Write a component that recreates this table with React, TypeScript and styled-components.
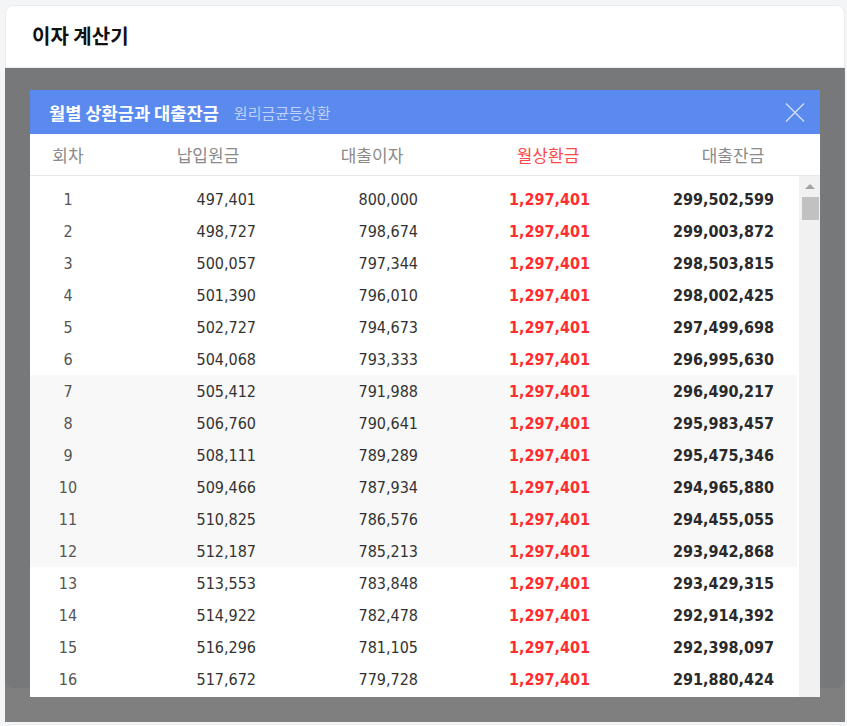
import React from 'react';
import styled, { createGlobalStyle } from 'styled-components';

const GlobalStyle = createGlobalStyle`
  html, body {
    margin: 0;
    padding: 0;
    background: #f4f5f7;
    overflow: hidden;
  }
  * {
    box-sizing: border-box;
  }
`;

const KR = `"Noto Sans CJK KR", "Noto Sans", sans-serif`;
const NUM = `"DejaVu Sans Condensed", "DejaVu Sans", sans-serif`;

const LOAN = 300000000;
const RATE = 0.032 / 12;
const MONTHS = 360;
// only the rows that fit in the list window are drawn
const VISIBLE = 16;

interface Schedule {
  no: number;
  principal: number;
  interest: number;
  payment: number;
  balance: number;
}

const buildSchedule = (): Schedule[] => {
  const payment = (LOAN * RATE) / (1 - Math.pow(1 + RATE, -MONTHS));
  const rows: Schedule[] = [];
  let balance = LOAN;
  for (let no = 1; no <= MONTHS; no += 1) {
    const interest = balance * RATE;
    const principal = payment - interest;
    balance -= principal;
    rows.push({ no, principal, interest, payment, balance: Math.max(balance, 0) });
  }
  return rows;
};

const won = (n: number) => Math.round(n).toLocaleString('en-US');

const schedule = buildSchedule();

const App = () => (
  <>
    <GlobalStyle />
    <Page>
      <TitleCard>
        <Title>이자 계산기</Title>
      </TitleCard>
      <Stage>
        <UnderCard />
        <Dim>
          <Modal>
            <ModalHead>
              <ModalTitle>월별 상환금과 대출잔금</ModalTitle>
              <ModalSub>원리금균등상환</ModalSub>
              <Close aria-label="닫기">
                <svg width="20" height="19" viewBox="0 0 20 19">
                  <path
                    d="M1 0.5 L19 18.5 M19 0.5 L1 18.5"
                    stroke="#d6e1fb"
                    strokeWidth="1.3"
                    fill="none"
                  />
                </svg>
              </Close>
            </ModalHead>
            <HeadRow>
              <HeadCell>회차</HeadCell>
              <HeadCell>납입원금</HeadCell>
              <HeadCell>대출이자</HeadCell>
              <HeadCell accent>월상환금</HeadCell>
              <HeadCell>대출잔금</HeadCell>
            </HeadRow>
            <Body>
              <Rows>
                {schedule.slice(0, VISIBLE).map((r) => (
                  <Row key={r.no} shaded={Math.floor((r.no - 1) / 6) % 2 === 1}>
                    <NoCell>{r.no}</NoCell>
                    <NumCell>{won(r.principal)}</NumCell>
                    <NumCell>{won(r.interest)}</NumCell>
                    <NumCell tone="red">{won(r.payment)}</NumCell>
                    <NumCell tone="dark">{won(r.balance)}</NumCell>
                  </Row>
                ))}
              </Rows>
              <ScrollTrack>
                <ArrowUp />
                <Thumb />
              </ScrollTrack>
            </Body>
          </Modal>
        </Dim>
      </Stage>
      <NextCard />
    </Page>
  </>
);

export default App;

const Page = styled.div`
  padding: 5px 2px 0 5px;
  height: 726px;
  overflow: hidden;
`;

const TitleCard = styled.header`
  height: 63px;
  background: #fff;
  border: 1px solid #e8eaee;
  border-radius: 8px 8px 0 0;
  display: flex;
  align-items: center;
  padding: 0 0 2px 26px;
`;

const Title = styled.h1`
  margin: 0;
  font-family: ${KR};
  font-size: 20px;
  font-weight: 700;
  color: #111;
`;

const Stage = styled.section`
  position: relative;
  height: 654px;
  background: #fff;
`;

const UnderCard = styled.div`
  height: 620px;
  margin-right: 1px;
  background: #eef0f3;
  border-radius: 0 0 8px 8px;
`;

const Dim = styled.div`
  position: absolute;
  inset: 0;
  background: rgba(0, 0, 0, 0.5);
  padding: 22px 24px 0 25px;
`;

const Modal = styled.div`
  width: 790px;
  height: 607px;
  background: #fff;
  display: flex;
  flex-direction: column;
  overflow: hidden;
`;

const ModalHead = styled.div`
  height: 44px;
  flex: none;
  background: #5b8aef;
  display: flex;
  align-items: center;
  padding: 0 15px 0 19px;
  gap: 15px;
`;

const ModalTitle = styled.h2`
  margin: 0;
  font-family: ${KR};
  font-size: 17.6px;
  font-weight: 700;
  color: #fff;
`;

const ModalSub = styled.span`
  font-family: ${KR};
  font-size: 15px;
  color: #bfd1f9;
`;

const Close = styled.button`
  margin-left: auto;
  border: 0;
  padding: 0;
  background: none;
  width: 20px;
  height: 19px;
  display: flex;
  cursor: pointer;
`;

const HeadRow = styled.div`
  height: 42px;
  flex: none;
  display: grid;
  grid-template-columns: 76px 204px 124px 228px 142px 16px;
  align-items: center;
  border-bottom: 1px solid #e8e8e8;
`;

const HeadCell = styled.div<{ accent?: boolean }>`
  text-align: center;
  font-family: ${KR};
  font-size: 17px;
  color: ${({ accent }) => (accent ? '#ff4a4a' : '#8a8a8a')};
`;

const Body = styled.div`
  flex: 1;
  min-height: 0;
  display: flex;
`;

const Rows = styled.div`
  flex: 1;
  overflow: hidden;
  padding: 7px 2px 0 0;
`;

const Row = styled.div<{ shaded: boolean }>`
  height: 32px;
  display: grid;
  grid-template-columns: 76px 150px 162px 172px 184px;
  align-items: center;
  background: ${({ shaded }) => (shaded ? '#f8f8f8' : '#fff')};
  font-family: ${NUM};
  font-size: 16px;
`;

const NoCell = styled.div`
  text-align: center;
  color: #555;
`;

const toneColor = { plain: '#333', red: '#ff2e2e', dark: '#2a2a2a' };

const NumCell = styled.div<{ tone?: 'plain' | 'red' | 'dark' }>`
  text-align: right;
  color: ${({ tone = 'plain' }) => toneColor[tone]};
  font-weight: ${({ tone = 'plain' }) => (tone === 'plain' ? 400 : 700)};
`;

const ScrollTrack = styled.div`
  width: 21px;
  flex: none;
  background: #f1f1f1;
  display: flex;
  flex-direction: column;
  align-items: center;
  padding: 8px 1px 0 2px;
`;

const ArrowUp = styled.div`
  width: 0;
  height: 0;
  border-left: 5px solid transparent;
  border-right: 5px solid transparent;
  border-bottom: 5px solid #a3a3a3;
`;

const Thumb = styled.div`
  margin-top: 8px;
  width: 17px;
  height: 23px;
  background: #c1c1c1;
`;

const NextCard = styled.div`
  margin-top: 2px;
  height: 40px;
  background: #fff;
  border: 1px solid #e8eaee;
  border-radius: 8px 8px 0 0;
`;
